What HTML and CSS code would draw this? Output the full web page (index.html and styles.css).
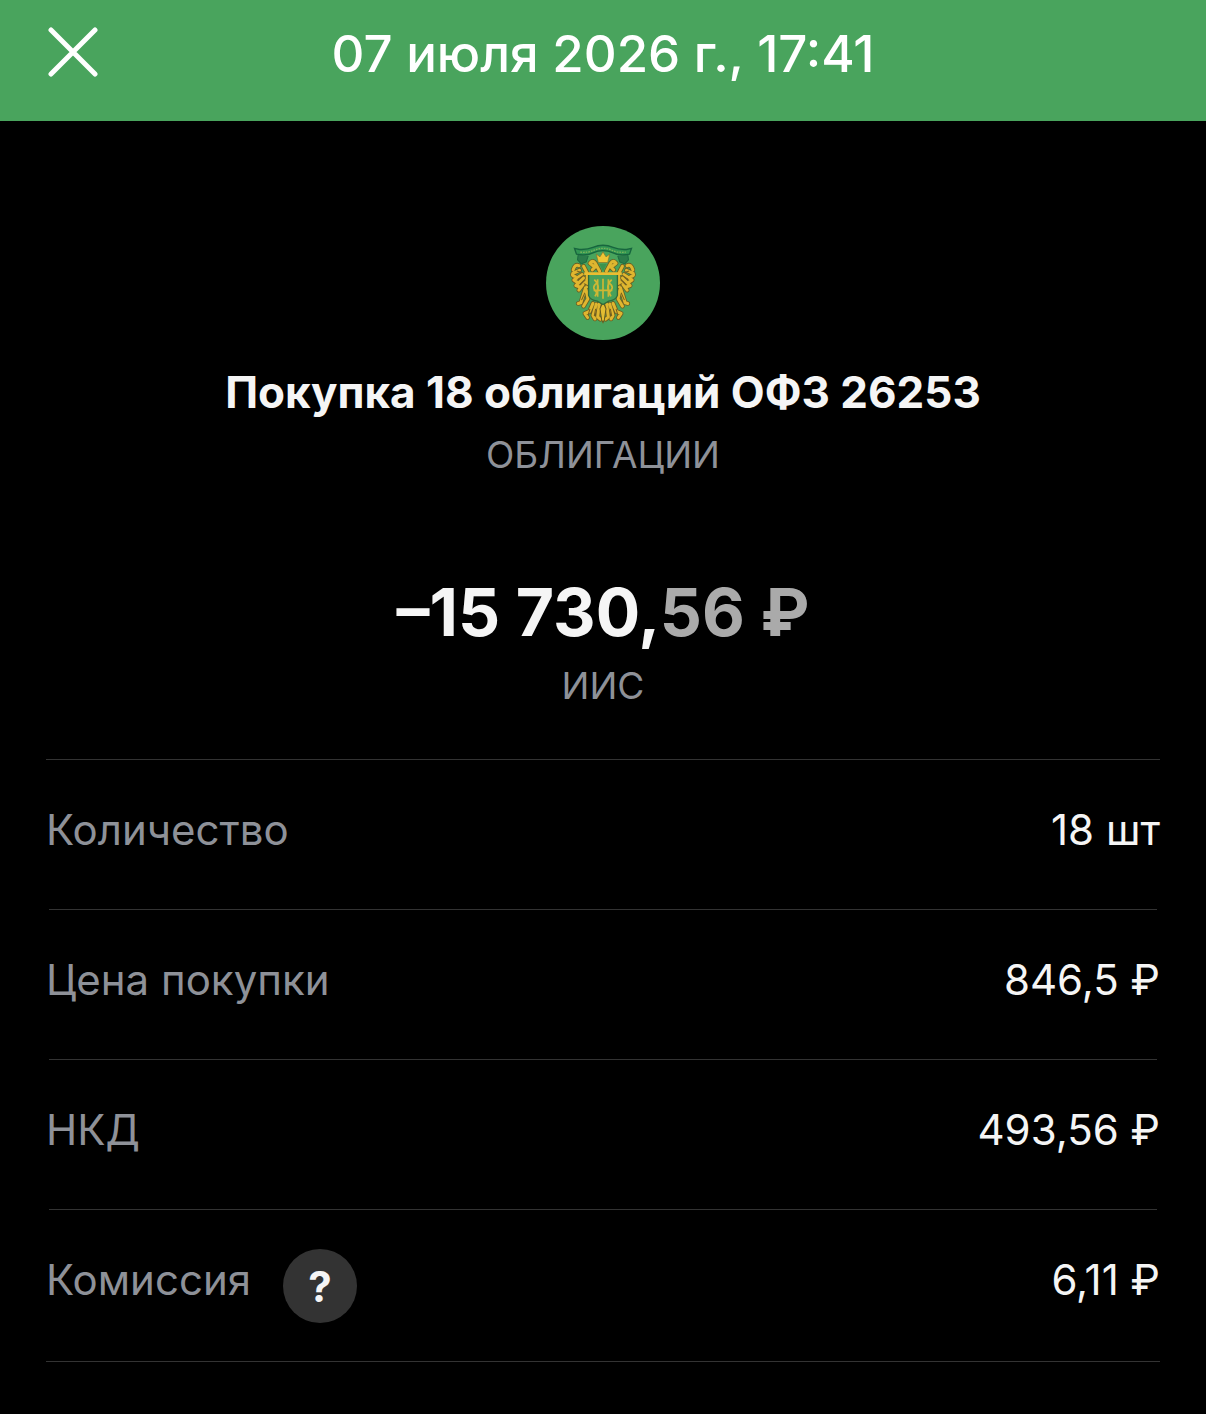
FILE: index.html
```html
<!DOCTYPE html>
<html lang="ru">
<head>
<meta charset="utf-8">
<meta name="viewport" content="width=device-width, initial-scale=1">
<title>Покупка 18 облигаций ОФЗ 26253</title>
<link rel="stylesheet" href="styles.css">
</head>
<body>
<header class="topbar">
  <button class="close" type="button" aria-label="Закрыть">
    <svg viewBox="0 0 50 50" aria-hidden="true"><path d="M3 3 47 47M47 3 3 47"/></svg>
  </button>
  <h1 class="topbar-title">07 июля 2026 г., 17:41</h1>
</header>
<main class="operation">
  <svg class="emblem" viewBox="20 19 340 340" aria-hidden="true">
    <circle cx="190" cy="189" r="170" fill="#49a45d"/>
    <!-- ribbon -->
    <path d="M116 104 114 120 125 132 140 126 146 108M264 104 266 120 255 132 240 126 234 108" fill="#2b7d4b" stroke="#1d6b42" stroke-width="3"/>
    <path d="M105 86 120 89Q144 90 160 83 190 70 220 83 236 90 260 89L275 86 269 103Q240 109 220 99 190 86 160 99 140 109 111 103Z" fill="#329653" stroke="#17653e" stroke-width="4"/>
    <path d="M122 97Q146 99 162 92 190 79 218 92 234 99 258 97" fill="none" stroke="#79b35a" stroke-width="4" stroke-dasharray="5 3"/>
    <!-- wings, heads, legs and tail: the left half is mirrored to the right -->
    <defs>
      <g id="eagle-half">
        <g fill="none" stroke="#6b5f22" stroke-width="14" stroke-linecap="round" stroke-linejoin="round">
          <path d="M118 137Q106 132 101 150M120 151 100 160Q96 168 108 170M128 164 103 180 113 187M132 174 109 197 121 201M138 183 118 210M143 166V200M132 139 142 158"/>
          <path d="M138 203 132 222 124 248 116 250M140 210 145 236 132 258M160 250 150 274 136 280 144 292M170 252 160 286 166 296M179 252 174 290 182 297"/>
          <path d="M180 154 167 130Q160 119 151 130L166 142 158 150"/>
        </g>
        <g fill="none" stroke="#dfb62f" stroke-width="9" stroke-linecap="round" stroke-linejoin="round">
          <path d="M118 137Q106 132 101 150M120 151 100 160Q96 168 108 170M128 164 103 180 113 187M132 174 109 197 121 201M138 183 118 210M143 166V200M132 139 142 158"/>
          <path d="M138 203 132 222 124 248 116 250M140 210 145 236 132 258M160 250 150 274 136 280 144 292M170 252 160 286 166 296M179 252 174 290 182 297"/>
          <path d="M180 154 167 130Q160 119 151 130L166 142 158 150"/>
        </g>
        <path d="M112 153 128 158M115 178 133 166M123 193 137 180M136 218 126 240M151 266 146 284M168 266 164 288M133 191 145 197" fill="none" stroke="#765f20" stroke-width="3"/>
      </g>
    </defs>
    <use href="#eagle-half"/>
    <use href="#eagle-half" transform="translate(380 0) scale(-1 1)"/>
    <path d="M190 244 181 266 186 299 190 307 194 299 199 266Z" fill="#e3bd32" stroke="#67591f" stroke-width="3"/>
    <!-- crown -->
    <path d="M176 128 170 103 181 111 190 96 199 111 210 103 204 128Z" fill="#efc536" stroke="#82702a" stroke-width="2"/>
    <path d="M179 132 190 154 201 132Z" fill="#3c934e"/>
    <!-- shield with monogram -->
    <path d="M147 162H233V226Q229 240 207 243L190 253 173 243Q151 240 147 226Z" fill="#48a15a" stroke="#306b3c" stroke-width="4"/>
    <path d="M134 161H246" stroke="#e9bd31" stroke-width="8"/>
    <path d="M190 176V236M164 179Q186 198 166 229M216 179Q194 198 214 229M174 178V230M206 178V230M162 211H218M174 187Q151 202 174 219M206 187Q229 202 206 219" fill="none" stroke="#cdb734" stroke-width="5"/>
  </svg>
  <h2 class="operation-title">Покупка 18 облигаций ОФЗ 26253</h2>
  <p class="caption">ОБЛИГАЦИИ</p>
  <p class="amount">–15 730,<span class="amount-minor">56 ₽</span></p>
  <p class="caption account">ИИС</p>
  <dl class="details">
    <div class="row"><dt>Количество</dt><dd>18 шт</dd></div>
    <div class="row"><dt>Цена покупки</dt><dd>846,5 ₽</dd></div>
    <div class="row"><dt>НКД</dt><dd>493,56 ₽</dd></div>
    <div class="row">
      <dt>Комиссия <button class="help" type="button" aria-label="О комиссии">?</button></dt>
      <dd>6,11 ₽</dd>
    </div>
  </dl>
</main>
</body>
</html>
```
FILE: styles.css
```css
* { box-sizing: border-box; }

body {
  margin: 0;
  background: #000;
  color: #f5f5f5;
  font-family: Inter, "Liberation Sans", sans-serif;
}

h1, h2, p, dl, dd { margin: 0; }

button {
  border: 0;
  padding: 0;
  color: inherit;
  font-family: inherit;
  cursor: pointer;
}

.topbar {
  display: grid;
  grid-template-columns: 1fr auto 1fr;
  padding: 22px 48px 35px;
  background: #49a45d;
  color: #fff;
}

.close {
  width: 50px;
  height: 50px;
  margin-top: 5px;
  background: none;
}

.close svg {
  display: block;
  fill: none;
  stroke: currentColor;
  stroke-width: 5;
  stroke-linecap: round;
}

.topbar-title {
  font-size: 51px;
  font-weight: 500;
  line-height: 64px;
}

.operation {
  display: flex;
  flex-direction: column;
  align-items: center;
  padding: 105px 46px 52px;
  text-align: center;
}

.emblem {
  width: 114px;
  height: 114px;
}

.operation-title {
  margin-top: 26px;
  font-size: 44px;
  font-weight: 700;
  line-height: 52px;
}

.caption {
  margin-top: 15px;
  color: #8e9198;
  font-size: 37px;
  line-height: 44px;
}

.amount {
  margin-top: 95px;
  font-size: 66px;
  font-weight: 700;
  line-height: 80px;
}

.amount-minor { color: #aaa; }

.account { margin-top: 12px; }

.details {
  align-self: stretch;
  margin-top: 51px;
  border-bottom: 1px solid #333;
  font-size: 42px;
  line-height: 62px;
}

.row {
  display: grid;
  grid-template-columns: 1fr auto;
  align-content: start;
  min-height: 150px;
  padding-bottom: 38px;
}

.row::before {
  content: "";
  grid-column: 1 / -1;
  height: 1px;
  margin: 0 3px 39px;
  background: #333;
}

.row:first-child::before { margin: 0 0 39px; }

dt {
  display: flex;
  gap: 32px;
  color: #8e9198;
  text-align: left;
}

.help {
  width: 74px;
  height: 74px;
  border-radius: 50%;
  background: #333;
  color: #f5f5f5;
  font-size: 42px;
  font-weight: 700;
}
```
